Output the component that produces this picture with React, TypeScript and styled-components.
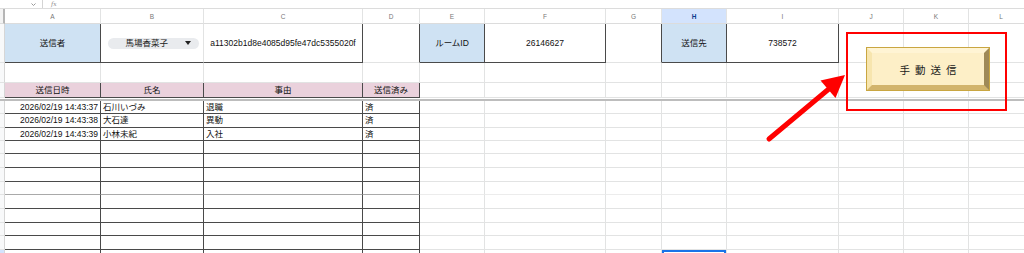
import React, {FC} from 'react';
import styled, {createGlobalStyle} from "styled-components";

const GRID = '#e2e3e3'
const DARK = '#4a4a4a'

const COLS = [5, 96, 103, 159, 57, 65, 121, 56, 65, 112, 65, 65, 65]
const LETTERS = ['', 'A', 'B', 'C', 'D', 'E', 'F', 'G', 'H', 'I', 'J', 'K', 'L']
const DATA_HEIGHTS = [13, 14, 13, 13, 14, 14, 13, 14, 14, 13, 14, 10]

const records = [
    {date: '2026/02/19 14:43:37', name: '石川いづみ', reason: '退職', sent: '済'},
    {date: '2026/02/19 14:43:38', name: '大石達', reason: '異動', sent: '済'},
    {date: '2026/02/19 14:43:39', name: '小林未紀', reason: '入社', sent: '済'},
]

const GlobalStyle = createGlobalStyle`
  body {
    margin: 0;
    background: #fff;
    overflow: hidden;
    font-family: "Liberation Sans", "Noto Sans CJK JP", sans-serif;
  }
`

type CellProps = {
    $w: number
    $bg?: string
    $r?: string
    $b?: string
    $align?: 'flex-start' | 'center' | 'flex-end'
    $sel?: boolean
}

const App: FC = () => {
    const blankRest = (from: number) => COLS.slice(from).map((w, i) => <Cell key={i} $w={w}/>)

    return (
        <>
            <GlobalStyle/>
            <Sheet>
                <FormulaStrip>
                    <Caret>
                        <svg width="5" height="3" viewBox="0 0 5 3">
                            <polyline points="0.5,0.5 2.5,2.5 4.5,0.5" fill="none" stroke="#999" strokeWidth="1"/>
                        </svg>
                    </Caret>
                    <Divider/>
                    <Fx>fx</Fx>
                </FormulaStrip>

                <Row $h={15}>
                    {COLS.map((w, i) => i === 0
                        ? <Corner key={i} $w={w}/>
                        : <ColHead key={i} $w={w} $active={LETTERS[i] === 'H'}>{LETTERS[i]}</ColHead>)}
                </Row>

                <Row $h={39}>
                    <RowHead/>
                    <Cell $w={COLS[1]} $bg="#cfe2f3" $r={DARK} $b={DARK} $align="center">送信者</Cell>
                    <Cell $w={COLS[2]} $b={DARK} $align="center">
                        <Chip>
                            <span>馬場香菜子</span>
                            <svg width="6" height="4" viewBox="0 0 6 4">
                                <polygon points="0,0 6,0 3,4" fill="#222"/>
                            </svg>
                        </Chip>
                    </Cell>
                    <Cell $w={COLS[3]} $r={DARK} $b={DARK} $align="center">a11302b1d8e4085d95fe47dc5355020f</Cell>
                    <Cell $w={COLS[4]} $r={DARK}/>
                    <Cell $w={COLS[5]} $bg="#cfe2f3" $r={DARK} $b={DARK} $align="center">ルームID</Cell>
                    <Cell $w={COLS[6]} $r={DARK} $b={DARK} $align="center">26146627</Cell>
                    <Cell $w={COLS[7]} $r={DARK}/>
                    <Cell $w={COLS[8]} $bg="#cfe2f3" $r={DARK} $b={DARK} $align="center">送信先</Cell>
                    <Cell $w={COLS[9]} $r={DARK} $b={DARK} $align="center">738572</Cell>
                    {blankRest(10)}
                </Row>

                <Row $h={20}>
                    <RowHead/>
                    {blankRest(1)}
                </Row>

                <Row $h={15}>
                    <RowHead/>
                    {['送信日時', '氏名', '事由', '送信済み'].map((t, i) =>
                        <Cell key={t} $w={COLS[i + 1]} $bg="#ead1dc" $r={DARK} $b={DARK} $align="center">{t}</Cell>)}
                    {blankRest(5)}
                </Row>

                <Frozen/>

                {DATA_HEIGHTS.map((h, r) => {
                    const rec = records[r]
                    const last = r === DATA_HEIGHTS.length - 1
                    // page break line drawn lighter, like in the sheet
                    const brk = r === 6
                    const bottom = brk ? '#a9a9a9' : DARK
                    return (
                        <Row key={r} $h={h}>
                            <RowHead $active={last}/>
                            <Cell $w={COLS[1]} $r={DARK} $b={bottom} $align="flex-end">{rec?.date}</Cell>
                            <Cell $w={COLS[2]} $r={DARK} $b={bottom}>{rec?.name}</Cell>
                            <Cell $w={COLS[3]} $r={DARK} $b={bottom}>{rec?.reason}</Cell>
                            <Cell $w={COLS[4]} $r={DARK} $b={bottom}>{rec?.sent}</Cell>
                            {COLS.slice(5).map((w, i) =>
                                <Cell key={i} $w={w} $b={brk ? '#ececec' : GRID} $sel={last && i === 3}/>)}
                        </Row>
                    )
                })}

                <Highlight/>
                <SendButton>手動送信</SendButton>
                <Arrow width="1024" height="253" viewBox="0 0 1024 253">
                    <line x1="769" y1="139" x2="830" y2="88" stroke="#ff0000" strokeWidth="5" strokeLinecap="round"/>
                    <polygon points="845,75 820.5,80.5 835.5,98" fill="#ff0000"/>
                </Arrow>
            </Sheet>
        </>
    );
};

export default App;

const Sheet = styled.div`
  position: relative;
  width: 1024px;
  height: 253px;
  overflow: hidden;
  font-size: 8.5px;
  color: #111;
`
const FormulaStrip = styled.div`
  display: flex;
  align-items: center;
  height: 9px;
  box-sizing: border-box;
  border-bottom: 1px solid #dcdcdc;
  color: #888;
`
const Caret = styled.span`
  display: flex;
  margin-left: 31px;
`
const Divider = styled.div`
  width: 1px;
  height: 8px;
  background: #d4d4d4;
  margin-left: 6px;
`
const Fx = styled.span`
  margin-left: 8px;
  font-style: italic;
  font-family: "DejaVu Serif", serif;
  font-size: 6px;
  line-height: 8px;
`
const Row = styled.div<{ $h: number }>`
  display: flex;
  height: ${({$h}) => $h}px;
  width: 1040px;
`
const Corner = styled.div<{ $w: number }>`
  flex: none;
  width: ${({$w}) => $w}px;
  box-sizing: border-box;
  background: #f3f3f3;
  border-right: 2px solid #b5b5b5;
  border-bottom: 1px solid #dcdcdc;
`
const ColHead = styled.div<{ $w: number, $active?: boolean }>`
  flex: none;
  width: ${({$w}) => $w}px;
  box-sizing: border-box;
  display: flex;
  align-items: center;
  justify-content: center;
  background: ${({$active}) => $active ? '#d3e3fd' : '#fff'};
  border-right: 1px solid ${GRID};
  border-bottom: 1px solid #dcdcdc;
  font-size: 6.5px;
  color: ${({$active}) => $active ? '#0b3b8c' : '#777'};
  font-weight: ${({$active}) => $active ? 700 : 400};
`
const RowHead = styled.div<{ $active?: boolean }>`
  flex: none;
  width: 5px;
  box-sizing: border-box;
  background: ${({$active}) => $active ? '#d3e3fd' : '#f8f9fa'};
  border-right: 1px solid #d6d6d6;
  border-bottom: 1px solid ${GRID};
`
const Cell = styled.div<CellProps>`
  flex: none;
  width: ${({$w}) => $w}px;
  box-sizing: border-box;
  display: flex;
  align-items: center;
  justify-content: ${({$align}) => $align || 'flex-start'};
  padding: 0 2px;
  overflow: hidden;
  white-space: nowrap;
  background: ${({$bg}) => $bg || '#fff'};
  border-right: 1px solid ${({$r}) => $r || GRID};
  border-bottom: 1px solid ${({$b}) => $b || GRID};
  box-shadow: ${({$sel}) => $sel ? 'inset 0 0 0 2px #1a73e8' : 'none'};
  line-height: 1;
`
const Chip = styled.div`
  width: 91px;
  height: 11px;
  margin-left: 2px;
  border-radius: 6px;
  background: #e9ebee;
  display: flex;
  align-items: center;
  justify-content: space-between;
  padding: 0 8px 0 18px;
  box-sizing: border-box;
  color: #222;
`
const Frozen = styled.div`
  height: 3px;
  width: 1024px;
  background: #bdbdbd;
  border-top: 1px solid #fff;
  box-sizing: border-box;
`
const Highlight = styled.div`
  position: absolute;
  left: 846px;
  top: 32px;
  width: 161px;
  height: 79px;
  box-sizing: border-box;
  border: 2px solid #ff0000;
`
const SendButton = styled.div`
  position: absolute;
  left: 867px;
  top: 48px;
  width: 122px;
  height: 42px;
  box-sizing: border-box;
  border-style: solid;
  border-width: 5px;
  border-color: #fff4d4 #9f8957 #d2b46c #f7e5ae;
  box-shadow: 0 0 0 1px #c9a641;
  background: #fdefc7;
  display: flex;
  align-items: center;
  justify-content: center;
  font-size: 10.5px;
  letter-spacing: 5px;
  padding-left: 5px;
  color: #1a1a1a;
`
const Arrow = styled.svg`
  position: absolute;
  left: 0;
  top: 0;
  pointer-events: none;
`
